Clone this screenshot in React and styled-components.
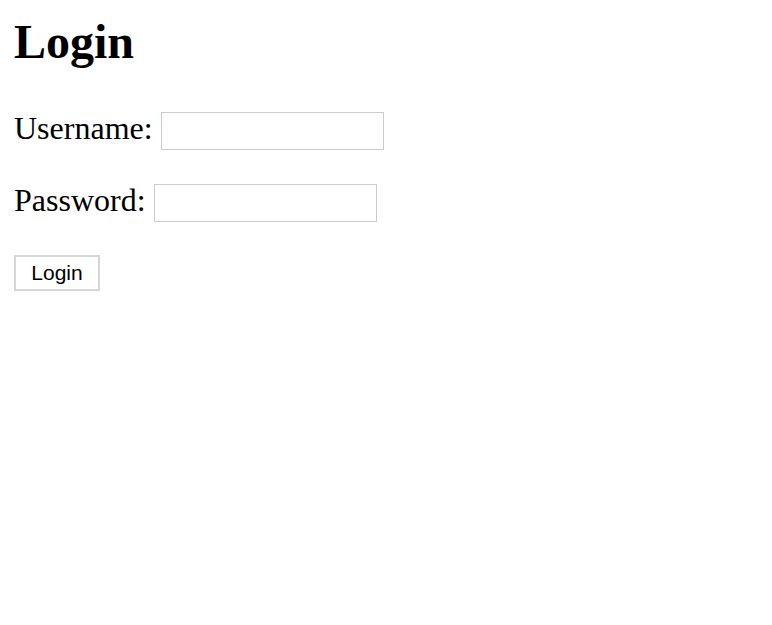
import React from 'react';
import styled, { createGlobalStyle } from 'styled-components';

const GlobalStyle = createGlobalStyle`
  html, body {
    margin: 0;
    padding: 0;
    background: #fff;
  }
`;

const Page = styled.main`
  padding: 14px 14px 0 14px;
  font-family: 'Liberation Serif', 'Times New Roman', serif;
  color: #000;
`;

const Title = styled.h1`
  margin: 0 0 39px 0;
  font-size: 48px;
  line-height: 56px;
  font-weight: 700;
`;

const Field = styled.div`
  display: flex;
  align-items: flex-start;
  height: 41px;
  margin-bottom: ${(p) => p.$gap || 31}px;
`;

const Label = styled.label`
  font-size: 32px;
  line-height: 38px;
  white-space: nowrap;
`;

const Input = styled.input`
  box-sizing: border-box;
  width: 223px;
  height: 38px;
  margin: 3px 0 0 8px;
  padding: 0 6px;
  border: 1px solid #cccccc;
  background: #fff;
  outline: none;
  font-size: 18px;
`;

const Button = styled.button`
  box-sizing: border-box;
  width: 86px;
  height: 36px;
  padding: 0;
  border: 2px solid #d6d6d6;
  border-radius: 0;
  background: #fff;
  color: #000;
  font-family: 'Liberation Sans', Arial, sans-serif;
  font-size: 21px;
  cursor: pointer;
`;

const App = () => {
  return (
    <>
      <GlobalStyle />
      <Page>
        <Title>Login</Title>
        <form onSubmit={(e) => e.preventDefault()}>
          <Field>
            <Label htmlFor="username">Username:</Label>
            <Input id="username" type="text" />
          </Field>
          <Field $gap={33}>
            <Label htmlFor="password">Password:</Label>
            <Input id="password" type="password" />
          </Field>
          <Button type="submit">Login</Button>
        </form>
      </Page>
    </>
  );
};

export default App;
